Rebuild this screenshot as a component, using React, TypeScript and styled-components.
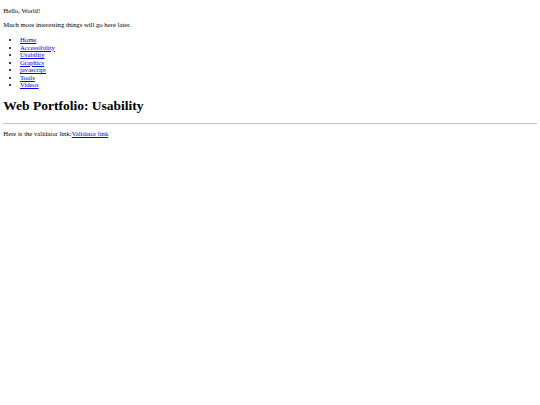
import React from 'react'
import styled, { createGlobalStyle } from 'styled-components'

// the reference is a default-styled page shown at roughly 5/12 scale
const GlobalStyle = createGlobalStyle`
  html, body {
    background: #fff;
  }
  body {
    margin: 3.33px;
    font-family: "Liberation Serif", "Times New Roman", serif;
    font-size: 6.7px;
    color: #000;
  }
`

const Page = styled.main`
  display: block;
`

const Para = styled.p<{ $top?: number }>`
  margin: ${props => props.$top ?? 6.667}px 0 6.667px;
`

const NavList = styled.ul`
  margin: 8.6px 0 6.667px;
  padding-left: 16.67px;
  list-style: disc;
`

const NavItem = styled.li`
  line-height: 7.45px;
`

const Link = styled.a`
  color: #0000ee;
  text-decoration: underline;
`

const Title = styled.h1`
  font-size: 13.5px;
  font-weight: bold;
  margin: 9.9px 0 8.93px;
`

const Rule = styled.hr`
  margin: 3.33px 0;
  border: none;
  border-top: 1px solid #c4c4c4;
  height: 0;
`

const links = ['Home', 'Accessibility', 'Usability', 'Graphics', 'javascript', 'Tools', 'Videos']

const App: React.FC = () => {
  return (
    <>
      <GlobalStyle />
      <Page>
        <Para $top={3.67}>Hello, World!</Para>
        <Para>Much more interesting things will go here later.</Para>
        <NavList>
          {links.map(l => (
            <NavItem key={l}>
              <Link href="#">{l}</Link>
            </NavItem>
          ))}
        </NavList>
        <Title>Web Portfolio: Usability</Title>
        <Rule />
        <Para $top={5.67}>
          Here is the validator link:<Link href="#">Validator link</Link>
        </Para>
      </Page>
    </>
  )
}

export default App
